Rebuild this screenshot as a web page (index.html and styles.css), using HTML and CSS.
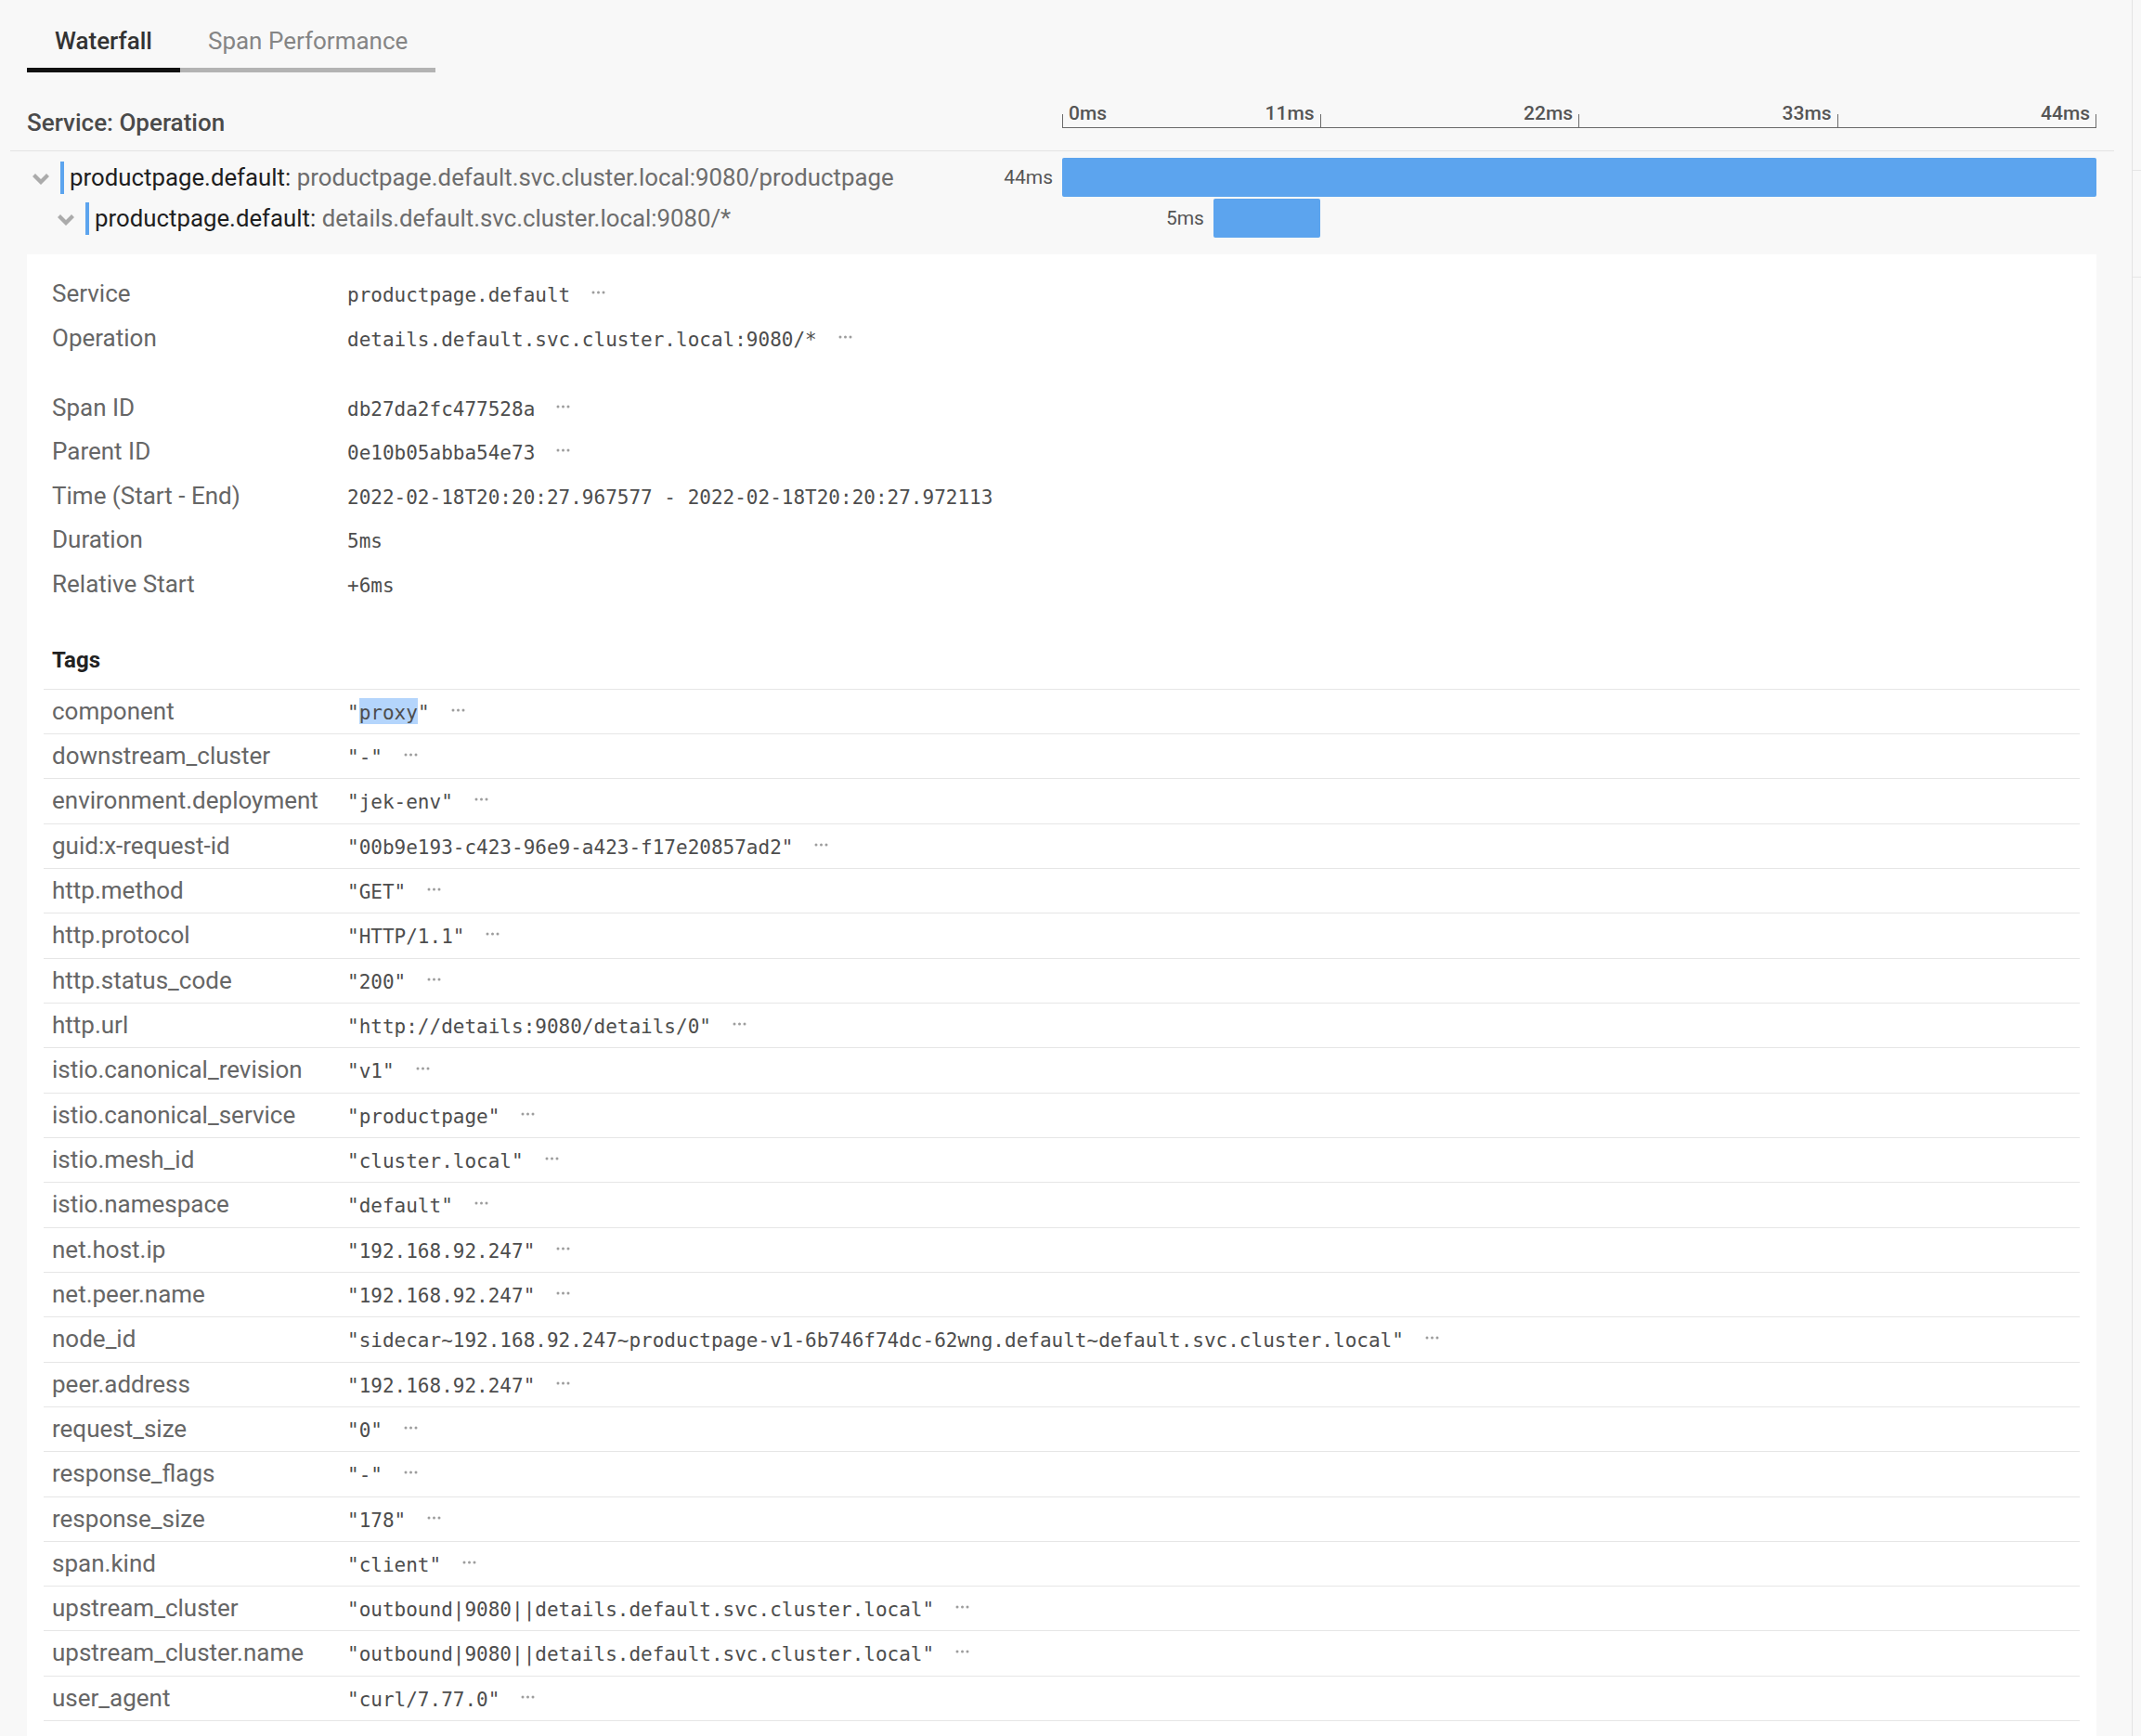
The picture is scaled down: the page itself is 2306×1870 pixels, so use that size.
FILE: index.html
```html
<!DOCTYPE html>
<html lang="en">
<head>
<meta charset="utf-8">
<title>Trace waterfall</title>
<link rel="stylesheet" href="styles.css">
</head>
<body>
<div class="page">
  <main class="main">
    <nav class="tabs">
      <div class="tab active">Waterfall</div>
      <div class="tab">Span Performance</div>
    </nav>

    <div class="header">
      <div class="name-col">Service: Operation</div>
      <div class="axis">
        <div class="seg first"><span>0ms</span><span>11ms</span></div>
        <div class="seg"><span>22ms</span></div>
        <div class="seg"><span>33ms</span></div>
        <div class="seg"><span>44ms</span></div>
      </div>
    </div>

    <div class="rows">
      <div class="span-row">
        <div class="name-col d0">
          <svg class="chev" viewBox="0 0 18 12"><polygon points="0,3 3,0 9,6 15,0 18,3 9,12"/></svg>
          <div class="lbl"><span class="svc">productpage.default:</span> <span class="op">productpage.default.svc.cluster.local:9080/productpage</span></div>
        </div>
        <div class="track">
          <div class="offset" style="width:0%"><span class="dur">44ms</span></div>
          <div class="bar" style="width:100%"></div>
        </div>
      </div>
      <div class="span-row">
        <div class="name-col d1">
          <svg class="chev" viewBox="0 0 18 12"><polygon points="0,3 3,0 9,6 15,0 18,3 9,12"/></svg>
          <div class="lbl"><span class="svc">productpage.default:</span> <span class="op">details.default.svc.cluster.local:9080/*</span></div>
        </div>
        <div class="track">
          <div class="offset" style="width:14.63%"><span class="dur">5ms</span></div>
          <div class="bar" style="width:10.32%"></div>
        </div>
      </div>
    </div>

    <section class="panel">
      <div class="kv"><div class="k">Service</div><div class="v">productpage.default<svg class="more" viewBox="0 0 15 4"><circle cx="2" cy="2" r="1.5"/><circle cx="7.5" cy="2" r="1.5"/><circle cx="13" cy="2" r="1.5"/></svg></div></div>
      <div class="kv"><div class="k">Operation</div><div class="v">details.default.svc.cluster.local:9080/*<svg class="more" viewBox="0 0 15 4"><circle cx="2" cy="2" r="1.5"/><circle cx="7.5" cy="2" r="1.5"/><circle cx="13" cy="2" r="1.5"/></svg></div></div>
      <div class="kv gap"><div class="k">Span ID</div><div class="v">db27da2fc477528a<svg class="more" viewBox="0 0 15 4"><circle cx="2" cy="2" r="1.5"/><circle cx="7.5" cy="2" r="1.5"/><circle cx="13" cy="2" r="1.5"/></svg></div></div>
      <div class="kv"><div class="k">Parent ID</div><div class="v">0e10b05abba54e73<svg class="more" viewBox="0 0 15 4"><circle cx="2" cy="2" r="1.5"/><circle cx="7.5" cy="2" r="1.5"/><circle cx="13" cy="2" r="1.5"/></svg></div></div>
      <div class="kv"><div class="k">Time (Start - End)</div><div class="v">2022-02-18T20:20:27.967577 - 2022-02-18T20:20:27.972113</div></div>
      <div class="kv"><div class="k">Duration</div><div class="v">5ms</div></div>
      <div class="kv"><div class="k">Relative Start</div><div class="v">+6ms</div></div>

      <h3 class="tags-h">Tags</h3>
      <div class="tags">
        <div class="tag"><div class="k">component</div><div class="v">"<span class="sel">proxy</span>"<svg class="more" viewBox="0 0 15 4"><circle cx="2" cy="2" r="1.5"/><circle cx="7.5" cy="2" r="1.5"/><circle cx="13" cy="2" r="1.5"/></svg></div></div>
        <div class="tag"><div class="k">downstream_cluster</div><div class="v">"-"<svg class="more" viewBox="0 0 15 4"><circle cx="2" cy="2" r="1.5"/><circle cx="7.5" cy="2" r="1.5"/><circle cx="13" cy="2" r="1.5"/></svg></div></div>
        <div class="tag"><div class="k">environment.deployment</div><div class="v">"jek-env"<svg class="more" viewBox="0 0 15 4"><circle cx="2" cy="2" r="1.5"/><circle cx="7.5" cy="2" r="1.5"/><circle cx="13" cy="2" r="1.5"/></svg></div></div>
        <div class="tag"><div class="k">guid:x-request-id</div><div class="v">"00b9e193-c423-96e9-a423-f17e20857ad2"<svg class="more" viewBox="0 0 15 4"><circle cx="2" cy="2" r="1.5"/><circle cx="7.5" cy="2" r="1.5"/><circle cx="13" cy="2" r="1.5"/></svg></div></div>
        <div class="tag"><div class="k">http.method</div><div class="v">"GET"<svg class="more" viewBox="0 0 15 4"><circle cx="2" cy="2" r="1.5"/><circle cx="7.5" cy="2" r="1.5"/><circle cx="13" cy="2" r="1.5"/></svg></div></div>
        <div class="tag"><div class="k">http.protocol</div><div class="v">"HTTP/1.1"<svg class="more" viewBox="0 0 15 4"><circle cx="2" cy="2" r="1.5"/><circle cx="7.5" cy="2" r="1.5"/><circle cx="13" cy="2" r="1.5"/></svg></div></div>
        <div class="tag"><div class="k">http.status_code</div><div class="v">"200"<svg class="more" viewBox="0 0 15 4"><circle cx="2" cy="2" r="1.5"/><circle cx="7.5" cy="2" r="1.5"/><circle cx="13" cy="2" r="1.5"/></svg></div></div>
        <div class="tag"><div class="k">http.url</div><div class="v">"http://details:9080/details/0"<svg class="more" viewBox="0 0 15 4"><circle cx="2" cy="2" r="1.5"/><circle cx="7.5" cy="2" r="1.5"/><circle cx="13" cy="2" r="1.5"/></svg></div></div>
        <div class="tag"><div class="k">istio.canonical_revision</div><div class="v">"v1"<svg class="more" viewBox="0 0 15 4"><circle cx="2" cy="2" r="1.5"/><circle cx="7.5" cy="2" r="1.5"/><circle cx="13" cy="2" r="1.5"/></svg></div></div>
        <div class="tag"><div class="k">istio.canonical_service</div><div class="v">"productpage"<svg class="more" viewBox="0 0 15 4"><circle cx="2" cy="2" r="1.5"/><circle cx="7.5" cy="2" r="1.5"/><circle cx="13" cy="2" r="1.5"/></svg></div></div>
        <div class="tag"><div class="k">istio.mesh_id</div><div class="v">"cluster.local"<svg class="more" viewBox="0 0 15 4"><circle cx="2" cy="2" r="1.5"/><circle cx="7.5" cy="2" r="1.5"/><circle cx="13" cy="2" r="1.5"/></svg></div></div>
        <div class="tag"><div class="k">istio.namespace</div><div class="v">"default"<svg class="more" viewBox="0 0 15 4"><circle cx="2" cy="2" r="1.5"/><circle cx="7.5" cy="2" r="1.5"/><circle cx="13" cy="2" r="1.5"/></svg></div></div>
        <div class="tag"><div class="k">net.host.ip</div><div class="v">"192.168.92.247"<svg class="more" viewBox="0 0 15 4"><circle cx="2" cy="2" r="1.5"/><circle cx="7.5" cy="2" r="1.5"/><circle cx="13" cy="2" r="1.5"/></svg></div></div>
        <div class="tag"><div class="k">net.peer.name</div><div class="v">"192.168.92.247"<svg class="more" viewBox="0 0 15 4"><circle cx="2" cy="2" r="1.5"/><circle cx="7.5" cy="2" r="1.5"/><circle cx="13" cy="2" r="1.5"/></svg></div></div>
        <div class="tag"><div class="k">node_id</div><div class="v">"sidecar~192.168.92.247~productpage-v1-6b746f74dc-62wng.default~default.svc.cluster.local"<svg class="more" viewBox="0 0 15 4"><circle cx="2" cy="2" r="1.5"/><circle cx="7.5" cy="2" r="1.5"/><circle cx="13" cy="2" r="1.5"/></svg></div></div>
        <div class="tag"><div class="k">peer.address</div><div class="v">"192.168.92.247"<svg class="more" viewBox="0 0 15 4"><circle cx="2" cy="2" r="1.5"/><circle cx="7.5" cy="2" r="1.5"/><circle cx="13" cy="2" r="1.5"/></svg></div></div>
        <div class="tag"><div class="k">request_size</div><div class="v">"0"<svg class="more" viewBox="0 0 15 4"><circle cx="2" cy="2" r="1.5"/><circle cx="7.5" cy="2" r="1.5"/><circle cx="13" cy="2" r="1.5"/></svg></div></div>
        <div class="tag"><div class="k">response_flags</div><div class="v">"-"<svg class="more" viewBox="0 0 15 4"><circle cx="2" cy="2" r="1.5"/><circle cx="7.5" cy="2" r="1.5"/><circle cx="13" cy="2" r="1.5"/></svg></div></div>
        <div class="tag"><div class="k">response_size</div><div class="v">"178"<svg class="more" viewBox="0 0 15 4"><circle cx="2" cy="2" r="1.5"/><circle cx="7.5" cy="2" r="1.5"/><circle cx="13" cy="2" r="1.5"/></svg></div></div>
        <div class="tag"><div class="k">span.kind</div><div class="v">"client"<svg class="more" viewBox="0 0 15 4"><circle cx="2" cy="2" r="1.5"/><circle cx="7.5" cy="2" r="1.5"/><circle cx="13" cy="2" r="1.5"/></svg></div></div>
        <div class="tag"><div class="k">upstream_cluster</div><div class="v">"outbound|9080||details.default.svc.cluster.local"<svg class="more" viewBox="0 0 15 4"><circle cx="2" cy="2" r="1.5"/><circle cx="7.5" cy="2" r="1.5"/><circle cx="13" cy="2" r="1.5"/></svg></div></div>
        <div class="tag"><div class="k">upstream_cluster.name</div><div class="v">"outbound|9080||details.default.svc.cluster.local"<svg class="more" viewBox="0 0 15 4"><circle cx="2" cy="2" r="1.5"/><circle cx="7.5" cy="2" r="1.5"/><circle cx="13" cy="2" r="1.5"/></svg></div></div>
        <div class="tag"><div class="k">user_agent</div><div class="v">"curl/7.77.0"<svg class="more" viewBox="0 0 15 4"><circle cx="2" cy="2" r="1.5"/><circle cx="7.5" cy="2" r="1.5"/><circle cx="13" cy="2" r="1.5"/></svg></div></div>
        <div class="tag"><div class="k">zone</div><div class="v">"us-west-2/zone"<svg class="more" viewBox="0 0 15 4"><circle cx="2" cy="2" r="1.5"/><circle cx="7.5" cy="2" r="1.5"/><circle cx="13" cy="2" r="1.5"/></svg></div></div>
      </div>
    </section>
  </main>
  <aside class="side">
    <div class="side-a"></div>
    <div class="side-b"></div>
  </aside>
</div>
</body>
</html>
```

FILE: styles.css
```css
html, body {
  margin: 0;
  height: 100%;
  overflow: hidden;
}

body {
  background: #f8f8f8;
  font-family: Roboto, "Liberation Sans", Arial, sans-serif;
  color: #333;
}

.page {
  display: flex;
  height: 100%;
}

.main {
  flex: 1;
  min-width: 0;
  padding: 0 19px 0 11px;
}

.side {
  width: 9px;
  flex: none;
  border-left: 1px solid #e3e3e3;
}

.side-a {
  height: 183px;
  border-bottom: 1px solid #e6e6e6;
}

.side-b {
  height: 114px;
  border-bottom: 1px solid #e6e6e6;
}

/* Tabs */
.tabs {
  display: flex;
  margin: 0 19px 0 18px;
  padding-top: 26px;
}

.tab {
  padding: 0 30px 11px;
  font-size: 26px;
  line-height: 36px;
  color: #858585;
  border-bottom: 5px solid #b3b3b3;
}

.tab.active {
  color: #333;
  font-weight: 500;
  border-bottom-color: #111;
}

/* Header with time axis */
.header {
  display: flex;
  align-items: flex-end;
  height: 84px;
  padding: 0 19px 0 18px;
  border-bottom: 1px solid #e3e3e3;
}

.header .name-col {
  width: 1115px;
  flex: none;
  font-size: 26px;
  line-height: 30px;
  font-weight: 500;
  color: #4a4a4a;
  margin-bottom: 15px;
}

.axis {
  flex: 1;
  display: flex;
  margin-bottom: 24px;
  border-bottom: 1px solid #6a6a6a;
  background: linear-gradient(#6a6a6a, #6a6a6a) left bottom / 1px 14px no-repeat;
}

.seg {
  flex: 1;
  display: flex;
  justify-content: flex-end;
  align-items: flex-end;
  padding: 0 7px 4px;
  font-size: 21px;
  line-height: 21px;
  font-weight: 500;
  color: #555;
  background: linear-gradient(#6a6a6a, #6a6a6a) right bottom / 1px 14px no-repeat;
}

.seg.first {
  justify-content: space-between;
}

/* Span rows */
.rows {
  margin: 0 19px 0 18px;
  padding-top: 6px;
}

.span-row {
  display: flex;
  height: 44px;
}

.span-row .name-col {
  box-sizing: border-box;
  width: 1115px;
  flex: none;
  display: flex;
  align-items: center;
}

.d0 { padding-left: 6px; }
.d1 { padding-left: 33px; }

.chev {
  width: 18px;
  height: 12px;
  flex: none;
  margin: 4px 12px 0 0;
  fill: #ababab;
}

.lbl {
  border-left: 4px solid #5ca4ee;
  padding-left: 6px;
  font-size: 25.8px;
  line-height: 35px;
  white-space: nowrap;
}

.svc { color: #1e1e1e; }
.op { color: #6d6d6d; }

.track {
  flex: 1;
  min-width: 0;
  display: flex;
  align-items: center;
}

.offset {
  flex: none;
  display: flex;
  justify-content: flex-end;
}

.dur {
  font-size: 21px;
  line-height: 21px;
  color: #555;
  margin-right: 10px;
  white-space: nowrap;
}

.bar {
  flex: none;
  height: 42px;
  background: #5ca4ee;
  border-radius: 2px;
}

/* Detail panel */
.panel {
  margin: 17px 19px 0 18px;
  padding: 19px 18px 40px;
  background: #fff;
}

.kv {
  display: flex;
  align-items: baseline;
  box-sizing: border-box;
  height: 47.5px;
  line-height: 47.5px;
  padding-left: 9px;
}

.kv.gap {
  margin-top: 27.5px;
}

.k {
  width: 318px;
  flex: none;
  font-size: 26px;
  color: #666;
  white-space: nowrap;
}

.v {
  font-family: "DejaVu Sans Mono", "Liberation Mono", monospace;
  font-size: 21px;
  color: #4d4d4d;
  white-space: pre;
}

.more {
  width: 15px;
  height: 4px;
  margin-left: 23px;
  vertical-align: 8px;
  fill: #9d9d9d;
}

.sel {
  background: #b4d5fc;
  padding-top: 4px;
}

.tags-h {
  margin: 42.6px 0 16px;
  padding-left: 9px;
  font-size: 24px;
  line-height: 30px;
  font-weight: 700;
  color: #222;
}

.tags {
  border-top: 1px solid #e6e6e6;
}

.tag {
  display: flex;
  align-items: baseline;
  box-sizing: border-box;
  height: 48.34px;
  line-height: 47.34px;
  padding-left: 9px;
  border-bottom: 1px solid #e6e6e6;
}
```
